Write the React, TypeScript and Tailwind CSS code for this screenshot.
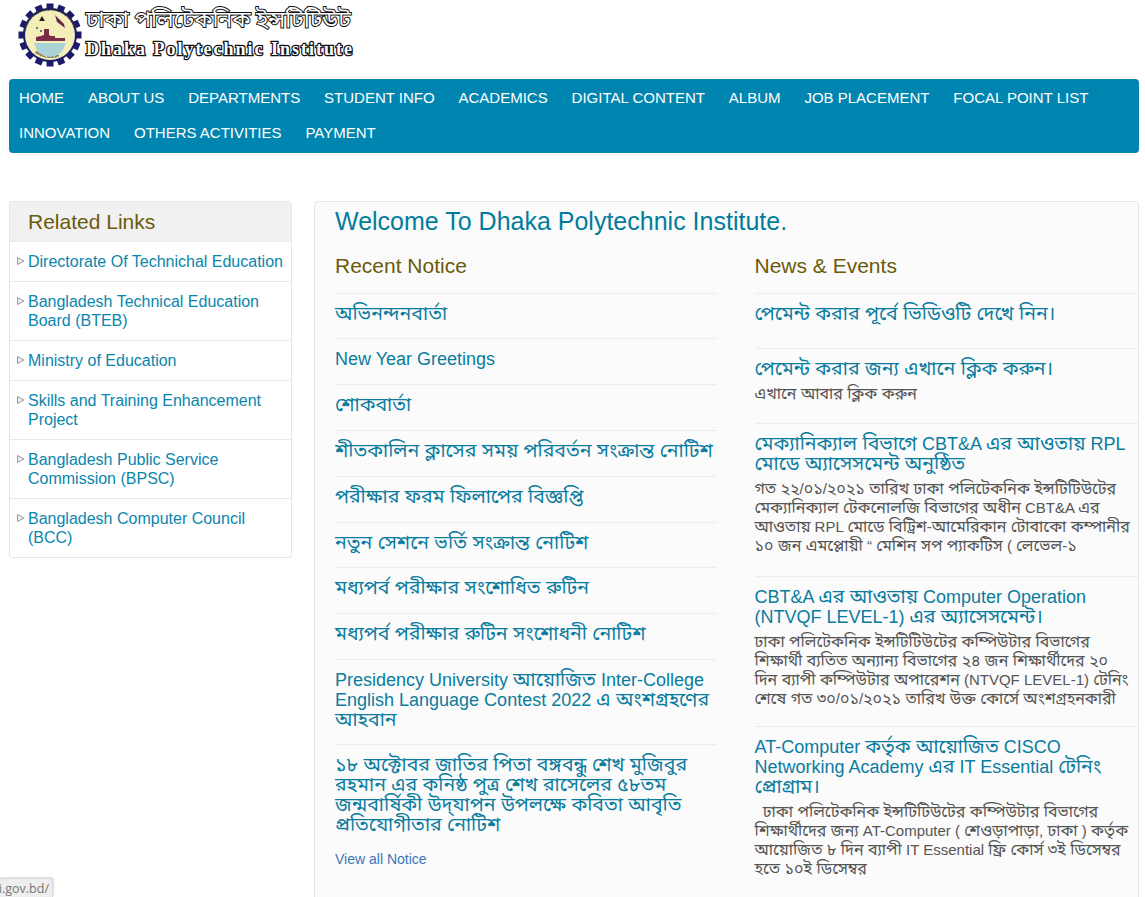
import { Fragment } from "react";

const nav = [
  ["HOME", "ABOUT US", "DEPARTMENTS", "STUDENT INFO", "ACADEMICS", "DIGITAL CONTENT", "ALBUM", "JOB PLACEMENT", "FOCAL POINT LIST"],
  ["INNOVATION", "OTHERS ACTIVITIES", "PAYMENT"],
];
const links = [
  "Directorate Of Technichal Education",
  "Bangladesh Technical Education Board (BTEB)",
  "Ministry of Education",
  "Skills and Training Enhancement Project",
  "Bangladesh Public Service Commission (BPSC)",
  "Bangladesh Computer Council (BCC)",
];
const notices = [
  "অভিনন্দনবার্তা",
  "New Year Greetings",
  "শোকবার্তা",
  "শীতকালিন ক্লাসের সময় পরিবর্তন সংক্রান্ত নোটিশ",
  "পরীক্ষার ফরম ফিলাপের বিজ্ঞপ্তি",
  "নতুন সেশনে ভর্তি সংক্রান্ত নোটিশ",
  "মধ্যপর্ব পরীক্ষার সংশোধিত রুটিন",
  "মধ্যপর্ব পরীক্ষার রুটিন সংশোধনী নোটিশ",
  "Presidency University আয়োজিত Inter-College English Language Contest 2022 এ অংশগ্রহণের আহবান",
  "১৮ অক্টোবর জাতির পিতা বঙ্গবন্ধু শেখ মুজিবুর রহমান এর কনিষ্ঠ পুত্র শেখ রাসেলের ৫৮তম জন্মবার্ষিকী উদ্‌যাপন উপলক্ষে কবিতা আবৃতি প্রতিযোগীতার নোটিশ",
];
const news = [
  { t: "পেমেন্ট করার পূর্বে ভিডিওটি দেখে নিন।", b: "", h: "h-[55px]" },
  { t: "পেমেন্ট করার জন্য এখানে ক্লিক করুন।", b: "এখানে আবার ক্লিক করুন", h: "h-[75px]" },
  { t: "মেক্যানিক্যাল বিভাগে CBT&A এর আওতায় RPL মোডে অ্যাসেসমেন্ট অনুষ্ঠিত", b: "গত ২২/০১/২০২১ তারিখ ঢাকা পলিটেকনিক ইন্সটিটিউটের মেক্যানিক্যাল টেকনোলজি বিভাগের অধীন CBT&A এর আওতায় RPL মোডে বিট্রিশ-আমেরিকান টোবাকো কম্পানীর ১০ জন এমপ্লোয়ী “ মেশিন সপ প্যাকটিস ( লেভেল-১", h: "h-[153px]" },
  { t: "CBT&A এর আওতায় Computer Operation (NTVQF LEVEL-1) এর অ্যাসেসমেন্ট।", b: "ঢাকা পলিটেকনিক ইন্সটিটিউটের কম্পিউটার বিভাগের শিক্ষার্থী ব্যতিত অন্যান্য বিভাগের ২৪ জন শিক্ষার্থীদের ২০ দিন ব্যাপী কম্পিউটার অপারেশন (NTVQF LEVEL-1) টেনিং শেষে গত ৩০/০১/২০২১ তারিখ উক্ত কোর্সে অংশগ্রহনকারী", h: "h-[150px]" },
  { t: "AT-Computer কর্তৃক আয়োজিত CISCO Networking Academy এর IT Essential টেনিং প্রোগ্রাম।", b: "\u00a0\u00a0ঢাকা পলিটেকনিক ইন্সটিটিউটের কম্পিউটার বিভাগের শিক্ষার্থীদের জন্য AT-Computer ( শেওড়াপাড়া, ঢাকা ) কর্তৃক আয়োজিত ৮ দিন ব্যাপী IT Essential ফ্রি কোর্স ৩ই ডিসেম্বর হতে ১০ই ডিসেম্বর", h: "" },
];
const rowH = ["h-[45px]", "h-[46px]", "h-[46px]", "h-[46px]", "h-[46px]", "h-[45px]", "h-[46px]", "h-[46px]", "h-[85px]", "h-[105px]"];

function Mixed({ text, big }: { text: string; big: boolean }) {
  const parts = text.split(/([\u0980-\u09FF\u200c\u200d]+(?:[ ।]+[\u0980-\u09FF\u200c\u200d।]+)*)/);
  return (
    <>
      {parts.map((p, i) =>
        /[\u0980-\u09FF]/.test(p) ? (
          <span key={i} className={big ? "text-[19.5px] leading-none" : "text-[16px] leading-none"}>{p}</span>
        ) : (
          <Fragment key={i}>{p}</Fragment>
        ),
      )}
    </>
  );
}

function Logo() {
  const teeth = Array.from({ length: 16 }, (_, i) => i * 22.5);
  return (
    <div className="flex h-[79px] items-start pl-[17px] pt-[1px]">
      <svg width="66" height="66" viewBox="0 0 66 66" className="mt-[1px]">
        <defs>
          <path id="ringTop" d="M8.5 33a24.5 24.5 0 0 1 49 0" />
          <path id="ringBottom" d="M14 46a23 23 0 0 0 38 0" />
        </defs>
        {teeth.map((a) => (
          <rect key={a} x="29.5" y="1.5" width="7" height="8" fill="#1c1a6b" transform={`rotate(${a} 33 33)`} />
        ))}
        <circle cx="33" cy="33" r="27" fill="#1c1a6b" />
        <circle cx="33" cy="33" r="25" fill="#f4eeb8" />
        <text fontSize="4" fontWeight="700" fill="#333" fontFamily="Liberation Sans, sans-serif">
          <textPath href="#ringTop" startOffset="4">DHAKA POLYTECHNIC INSTITUTE</textPath>
        </text>
        <text fontSize="3.6" fontWeight="700" fill="#333" fontFamily="Liberation Sans, sans-serif">
          <textPath href="#ringBottom" startOffset="6">BANGLADESH</textPath>
        </text>
        <path d="M17 41h32l-3 7a16 16 0 0 1-26 0z" fill="#a9d3d6" />
        <path d="M19 39h29v-3H38v-2h-4l-2-1v-6h-5v6l-3 1-5 1z" fill="#7a2b45" />
        <path d="M38 13l9 9 1 4-8-6z" fill="#6a2a4a" />
        <path d="M25 14l3 5h-6z" fill="#222" />
        <circle cx="20" cy="26" r="1" fill="#444" />
        <circle cx="24" cy="29" r="1" fill="#444" />
      </svg>
      <div className="ml-[3px] flex flex-col">
        <span className="font-['Noto_Sans_Bengali','Noto_Sans','Liberation_Sans',sans-serif] mt-[5px] h-[31px] text-[22.7px] leading-[31px] font-normal whitespace-nowrap text-white [paint-order:stroke_fill] [-webkit-text-stroke:2px_#111]">
          ঢাকা পলিটেকনিক ইন্সটিটিউট
        </span>
        <span className="font-['Liberation_Serif',serif] mt-[3px] text-[18px] leading-[18px] font-bold tracking-[2px] whitespace-nowrap text-white [paint-order:stroke_fill] [-webkit-text-stroke:2.5px_#111]">
          Dhaka Polytechnic Institute
        </span>
      </div>
    </div>
  );
}

export default function App() {
  return (
    <div className="relative h-[897px] w-[1145px] overflow-hidden bg-white font-['Liberation_Sans','Noto_Sans_Bengali',sans-serif] text-[16px]">
      <Logo />
      <nav className="mx-[9px] w-[1130px] rounded-[4px] bg-[#0085b1] py-[2px] pl-[10px]">
        {nav.map((row, i) => (
          <ul key={i} className="flex h-[35px] items-center gap-[23.9px] text-[15px] text-white">
            {row.map((n) => (
              <li key={n}>{n}</li>
            ))}
          </ul>
        ))}
      </nav>
      <div className="mx-[9px] mt-[48px] flex w-[1130px] items-start gap-[22px]">
        <aside className="w-[283px] rounded-[3px] border border-[#e6e6e6] bg-white">
          <h3 className="flex h-[39px] items-center rounded-t-[3px] bg-[#f1f1f1] pl-[18px] text-[21px] text-[#6b5a0a]">Related Links</h3>
          {links.map((l) => (
            <div key={l} className="relative border-t border-[#e9e9e9] py-[10px] pl-[18px] pr-[4px] text-[16px] leading-[19px] text-[#0a86ad] first:border-t-0">
              <svg width="8" height="8" viewBox="0 0 8 8" className="absolute left-[7px] top-[15px]">
                <path d="M0.5 0.5L7 4L0.5 7.5z" fill="#eee" stroke="#999" strokeWidth="1" />
              </svg>
              {l}
            </div>
          ))}
        </aside>
        <main className="h-[720px] w-[825px] rounded-t-[4px] border border-[#e6e6e6] bg-[#fbfbfb] pl-[20px]">
          <h1 className="h-[36px] pt-[3px] text-[25px] leading-[32px] text-[#007d9c]">Welcome To Dhaka Polytechnic Institute.</h1>
          <div className="flex">
            <section className="w-[382px]">
              <h2 className="flex h-[55px] items-center text-[21px] text-[#6b5a0a]">Recent Notice</h2>
              {notices.map((n, i) => (
                <div key={n} className={`border-t border-[#ececec] pt-[10px] text-[18px] leading-[20px] text-[#0a7ca0] ${rowH[i]}`}>
                  <Mixed text={n} big />
                </div>
              ))}
              <a className="block text-[14px] text-[#3a76b8]">View all Notice</a>
            </section>
            <section className="ml-[38px] w-[384px]">
              <h2 className="flex h-[55px] items-center text-[21px] text-[#6b5a0a]">News &amp; Events</h2>
              {news.map((n) => (
                <div key={n.t} className={`border-t border-[#ececec] pt-[10px] ${n.h}`}>
                  <div className="text-[18px] leading-[20px] text-[#0a7ca0]"><Mixed text={n.t} big /></div>
                  {n.b && <div className="mt-[5px] pr-[6px] text-[15px] leading-[19px] text-[#555]"><Mixed text={n.b} big={false} /></div>}
                </div>
              ))}
            </section>
          </div>
        </main>
      </div>
      <div className="absolute bottom-0 left-0 flex h-[19px] w-[53px] justify-end overflow-hidden rounded-tr-[3px] border-t border-r border-[#d8d8d8] bg-[#eeeeee] pr-[3px] font-['Open_Sans',sans-serif] text-[12.5px] leading-[19px] whitespace-nowrap text-[#777] shadow-[1px_-1px_2px_rgba(0,0,0,0.12)]">
        <span>dpi.gov.bd/</span>
      </div>
    </div>
  );
}
